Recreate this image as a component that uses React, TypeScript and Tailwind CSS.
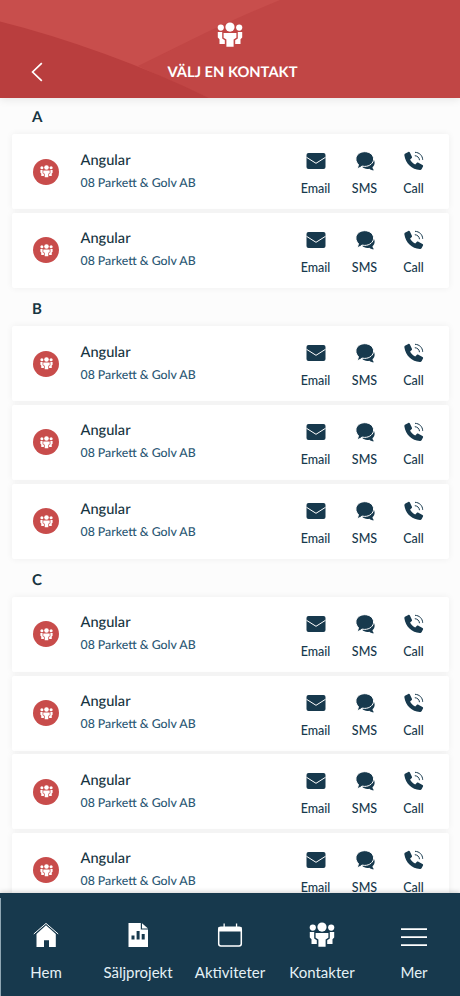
import type { ReactNode } from "react";

const sections = [
  { letter: "A", count: 2 },
  { letter: "B", count: 3 },
  { letter: "C", count: 4 },
];

const contact = { name: "Angular", company: "08 Parkett & Golv AB" };

function PeopleIcon({ className }: { className?: string }) {
  return (
    <svg viewBox="0 0 26 26" fill="currentColor" className={className}>
      <circle cx="13" cy="5.1" r="4.6" />
      <circle cx="3.8" cy="5.6" r="3.1" />
      <circle cx="22.2" cy="5.6" r="3.1" />
      <path d="M6.6 11h12.8v4.8l-2.8 1.7v7.2H9.4v-7.2l-2.8-1.7z" />
      <path d="M.8 9.9h4.4v6.5l2.6 1.8v3.7H2.5v-4.7L.8 15.6z" />
      <path d="M25.2 9.9h-4.4v6.5l-2.6 1.8v3.7h5.3v-4.7l1.7-1.6z" />
    </svg>
  );
}

function MailIcon() {
  return (
    <svg viewBox="0 0 20 20" className="size-5">
      <rect x=".5" y="2" width="19" height="16" rx="2" fill="currentColor" />
      <path d="M.5 6.3 10 12.3l9.5-6" fill="none" stroke="#fff" strokeWidth="1" />
    </svg>
  );
}

function ChatIcon() {
  return (
    <svg viewBox="0 0 20 20" className="size-5">
      <path
        d="M18.8 8.5c1.5 3.2.9 5.9-1.3 7.7 0 1.1.6 2 1.5 3-2.1.1-3.6-.5-4.6-1.5-2.8.6-5.6 0-7.3-1.9Z"
        fill="currentColor"
      />
      <path
        d="M9.7.7C4.8.7.9 3.9.9 8c0 2.3 1 4.100 2.500 5.400 0 1.500-.6 2.800-1.400 4 2.300-.2 3.800-1 4.900-2.300.9.200 1.800.3 2.800.3 4.900 0 8.900-3.200 8.900-7.400S14.600.7 9.700.7Z"
        fill="currentColor"
        stroke="#fff"
        strokeWidth="1"
      />
    </svg>
  );
}

function CallIcon() {
  return (
    <svg viewBox="0 0 20 20" className="size-5">
      <path
        d="M1.400 2.500 4.300 1c.6-.3 1.300-.1 1.600.5l2 4.200c.3.600.1 1.200-.4 1.600L6.100 8.500c1 2.100 2.600 3.800 5.100 4.900l1.500-1.400c.5-.5 1.100-.6 1.700-.3l4.100 2.200c.6.300.8.900.5 1.500l-1.300 2.500c-.4.700-1 1.100-1.800 1C7.800 18.600 1.500 12.400.4 4.500c-.1-.9.200-1.600 1-2Z"
        fill="currentColor"
      />
      <path
        d="M11 1.300c4.400.2 7.500 3.200 7.700 7.500M10.800 4.700c2.700.200 4.500 1.900 4.700 4.500"
        fill="none"
        stroke="currentColor"
        strokeWidth="1"
      />
    </svg>
  );
}

function HomeIcon() {
  return (
    <svg viewBox="0 0 26 26" className="size-[26px]">
      <path d="M.8 12 13 1.4 25.2 12" fill="none" stroke="currentColor" strokeWidth="1" />
      <path d="M13 3.3 22.8 12v13H16v-6.8h-5V25H3.500V12Z" fill="currentColor" />
    </svg>
  );
}

function ReportIcon() {
  return (
    <svg viewBox="0 0 26 26" className="size-[26px]">
      <path d="M3.500 1h12.300v6.500H23V25H3.500Z" fill="currentColor" />
      <path d="M17 1.200 23 6.500h-6Z" fill="currentColor" />
      <path d="M6.500 13.500h3V17.500h-3ZM11.600 9h3v8.500h-3ZM16.700 12h3v5.500h-3Z" fill="#17394d" />
    </svg>
  );
}

function CalendarIcon() {
  return (
    <svg viewBox="0 0 26 26" className="size-[26px]">
      <rect x="1.700" y="5.200" width="22.600" height="18.800" rx="2.200" fill="none" stroke="currentColor" strokeWidth="1.500" />
      <path d="M1.500 5h23v4.600h-23ZM6.500 1.500h1.300V6H6.500ZM18.900 1.500h1.300V6h-1.300Z" fill="currentColor" />
    </svg>
  );
}

function MenuIcon() {
  return (
    <svg viewBox="0 0 26 26" className="size-[26px]">
      <path d="M0 7.2h26M0 15.2h26M0 23.2h26" stroke="currentColor" strokeWidth="1.700" />
    </svg>
  );
}

function Action({ icon, label }: { icon: ReactNode; label: string }) {
  return (
    <button className="flex w-[49px] flex-col items-center">
      {icon}
      <span className="mt-[10px] text-[12.5px] leading-4 font-medium">{label}</span>
    </button>
  );
}

function ContactCard() {
  return (
    <div className="flex h-[75px] shrink-0 items-center rounded-[2px] bg-white pr-[11px] pl-[21px] shadow-[0_0_7px_rgba(0,0,0,0.06)]">
      <div className="flex size-[26px] items-center justify-center rounded-full bg-[#c84c4b] text-white">
        <PeopleIcon className="size-[13px]" />
      </div>
      <div className="ml-[21.500px] flex-1 pb-[2px]">
        <h3 className="text-[14.6px] leading-5 font-medium text-[#163441]">{contact.name}</h3>
        <p className="mt-[4px] text-[12.3px] leading-4 font-medium text-[#2b5874]">{contact.company}</p>
      </div>
      <div className="flex pt-[5px] text-[#17394d]">
        <Action icon={<MailIcon />} label="Email" />
        <Action icon={<ChatIcon />} label="SMS" />
        <Action icon={<CallIcon />} label="Call" />
      </div>
    </div>
  );
}

const tabs = [
  { label: "Hem", icon: <HomeIcon /> },
  { label: "Säljprojekt", icon: <ReportIcon /> },
  { label: "Aktiviteter", icon: <CalendarIcon /> },
  { label: "Kontakter", icon: <PeopleIcon className="size-[26px]" /> },
  { label: "Mer", icon: <MenuIcon /> },
];

export default function App() {
  return (
    <div className="flex h-[996px] w-[460px] flex-col overflow-hidden bg-[#fcfcfc] font-['Lato',sans-serif] [text-rendering:geometricPrecision]">
      {/* Header */}
      <header className="relative z-10 h-[98px] shrink-0 bg-[#c84e4c] text-white shadow-[0_1px_9px_rgba(0,0,0,0.1)]">
        <svg viewBox="0 0 460 98" className="absolute inset-0 h-full w-full">
          <path d="M138 66 205 33Q248 13 280 0H460V98H209Z" fill="#c14645" />
          <path d="M0 21.500Q50 34 105 54T209 98H0Z" fill="#b93e3e" />
        </svg>
        <div className="relative flex flex-col items-center pt-[22px]">
          <PeopleIcon className="size-[26px]" />
          <div className="mt-[12.500px] grid w-full grid-cols-[60px_1fr_60px] items-center">
            <button className="pl-[31px]">
              <svg viewBox="0 0 12 20" className="h-5 w-3">
                <path d="M10.8 1.2 1.6 10l9.2 8.800" fill="none" stroke="currentColor" strokeWidth="1.700" />
              </svg>
            </button>
            <h1 className="pl-[5px] text-center text-[14.7px] leading-[22px] font-bold">VÄLJ EN KONTAKT</h1>
          </div>
        </div>
      </header>

      {/* Contact list */}
      <main className="min-h-0 flex-1 overflow-hidden pr-[11px] pl-3">
        {sections.map((section) => (
          <section key={section.letter} className="pb-[2px]">
            <h2 className="flex h-[36.400px] items-center pt-[2px] pl-[20px] text-[15px] font-bold text-[#163441]">
              {section.letter}
            </h2>
            <div className="flex flex-col gap-[3.600px]">
              {Array.from({ length: section.count }, (_, i) => (
                <ContactCard key={i} />
              ))}
            </div>
          </section>
        ))}
      </main>

      {/* Bottom tabs */}
      <nav className="relative z-10 grid h-[103px] shrink-0 grid-cols-5 bg-[#17394d] pt-[29px] text-white shadow-[0_-1px_5px_rgba(0,0,0,0.18)]">
        <div className="absolute top-[5px] bottom-0 left-0 w-px bg-[#8fa7b4]" />
        {tabs.map((tab) => (
          <button key={tab.label} className="flex flex-col items-center">
            {tab.icon}
            <span className="mt-[14px] text-[15px] leading-5 text-[#e5f1f6]">{tab.label}</span>
          </button>
        ))}
      </nav>
    </div>
  );
}
